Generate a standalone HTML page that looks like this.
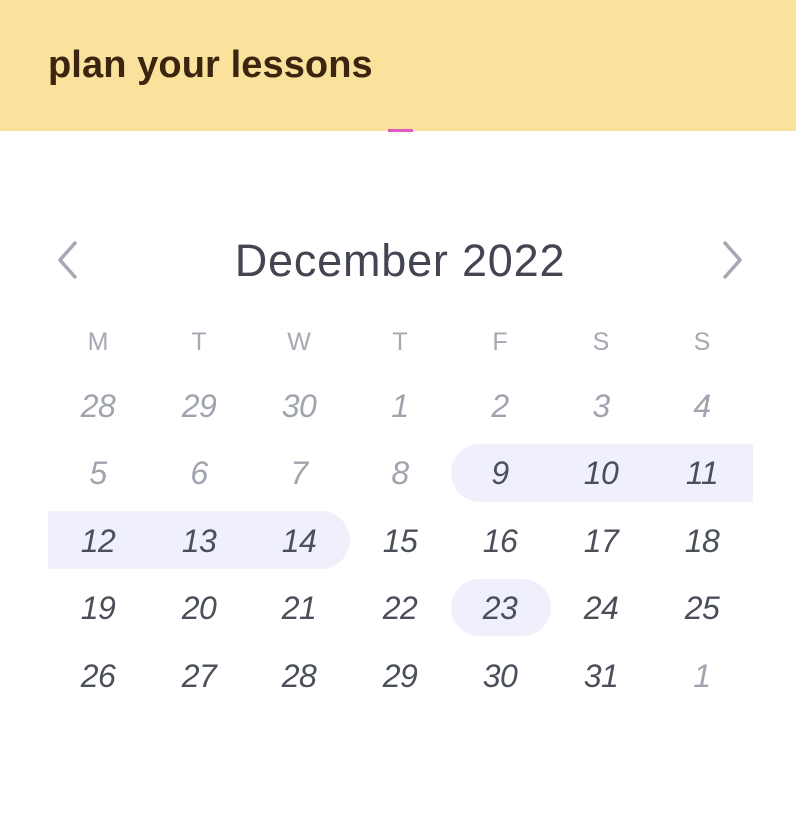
<!DOCTYPE html>
<html><head><meta charset="utf-8"><style>
*{margin:0;padding:0;box-sizing:border-box}
body{width:796px;height:820px;background:#fff;position:relative;overflow:hidden;font-family:"Liberation Sans",sans-serif}
.hdr{position:absolute;left:0;top:0;width:796px;height:131px;background:#FAE29C}
.title{position:absolute;left:48px;top:44px;font-size:38px;font-weight:bold;color:#3B2410;letter-spacing:0.1px}
.pink{position:absolute;left:388px;top:129px;width:25px;height:3px;background:#E05BBF}
.month{position:absolute;left:0;width:800px;top:235px;text-align:center;font-size:45px;color:#434652;letter-spacing:0.8px}
.c{position:absolute;width:100px;text-align:center;transform:translateX(-50%)}
.wd{font-size:25px;color:#A6A8B2;top:328px}
.d{font-size:32px;font-style:italic;color:#4A4F5A;font-family:"Liberation Sans",sans-serif;letter-spacing:-0.5px}
.g{color:#A0A4AE}
.hl{position:absolute;background:#F0F0FC}
</style></head><body>
<div class="hdr"></div>
<div class="title">plan your lessons</div>
<div class="pink"></div>
<svg style="position:absolute;left:55px;top:240px" width="24" height="40"><path d="M20 3 L5 20 L20 37" fill="none" stroke="#A6A8B2" stroke-width="3.5" stroke-linecap="round" stroke-linejoin="round"/></svg>
<svg style="position:absolute;left:721px;top:240px" width="24" height="40"><path d="M4 3 L19 20 L4 37" fill="none" stroke="#A6A8B2" stroke-width="3.5" stroke-linecap="round" stroke-linejoin="round"/></svg>
<div class="month">December 2022</div>
<div class="hl" style="left:451px;top:444px;width:302px;height:58px;border-radius:29px 0 0 29px"></div>
<div class="hl" style="left:48px;top:511px;width:302px;height:58px;border-radius:0 29px 29px 0"></div>
<div class="hl" style="left:451px;top:579px;width:100px;height:57px;border-radius:29px"></div>
<div id="cal"></div>
<script>
var xs=[98,199,299,400,500,601,702],ys=[388,455,523,590,658];
var w="MTWTFSS",h="";
for(var i=0;i<7;i++)h+='<div class="c wd" style="left:'+xs[i]+'px">'+w[i]+'</div>';
var days=[28,29,30,1,2,3,4];for(var d=5;d<=31;d++)days.push(d);days.push(1);
for(var k=0;k<35;k++){var g=(k<7||k==34||(k>=7&&k<11));
h+='<div class="c d'+(g?' g':'')+'" style="left:'+xs[k%7]+'px;top:'+ys[Math.floor(k/7)]+'px">'+days[k]+'</div>';}
document.getElementById('cal').innerHTML=h;
</script>
</body></html>
